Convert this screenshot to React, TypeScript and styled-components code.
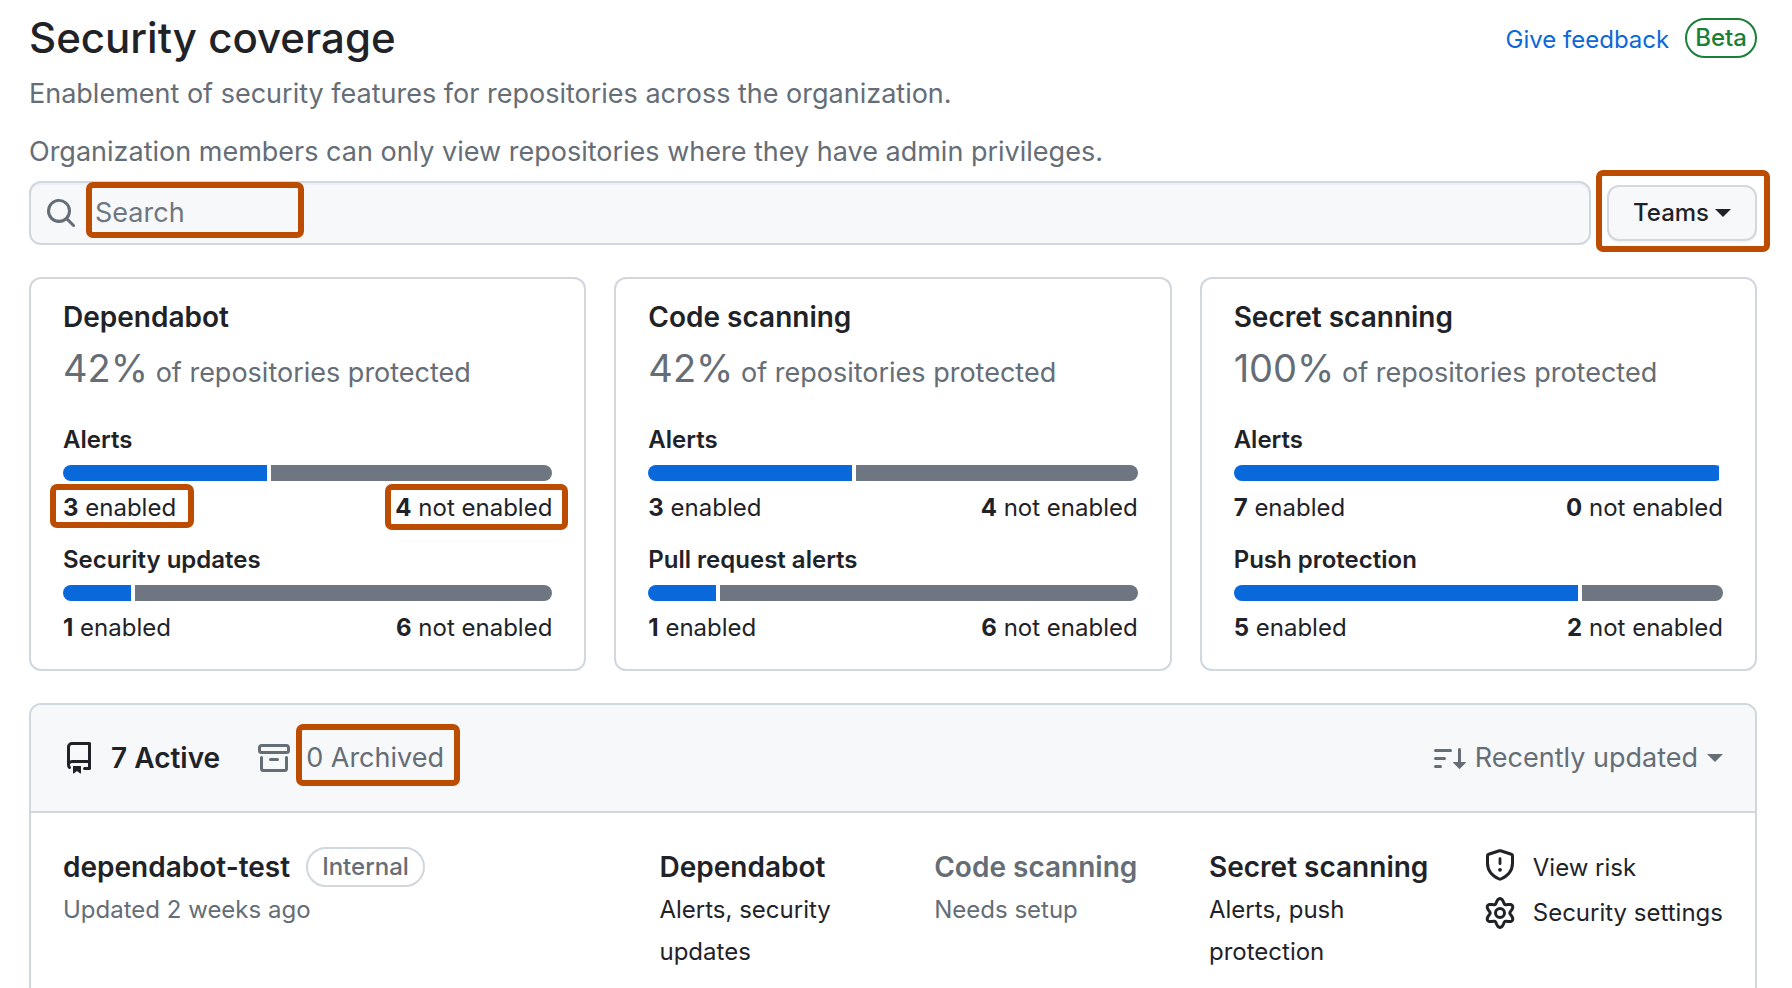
import React, { useState } from "react";
import styled, { createGlobalStyle } from "styled-components";

const fg = "#1f2328";
const muted = "#656d76";
const line = "#d0d7de";
const subtle = "#f6f8fa";
const blue = "#0969da";
const mark = "#bc4c00";

const GlobalStyle = createGlobalStyle`
  * { box-sizing: border-box; }
  body {
    margin: 0;
    background: #fff;
    color: ${fg};
    font-family: Inter, "Liberation Sans", sans-serif;
    font-size: 24px;
    line-height: 36px;
  }
  h1, h2, h3, p { margin: 0; }
  button, input { font: inherit; color: inherit; }
`;

const Page = styled.div`
  padding: 11px 35px 24px 29px;
`;

const PageHeader = styled.header`
  display: flex;
  justify-content: space-between;
  align-items: flex-start;
`;

const Title = styled.h1`
  font-size: 42px;
  line-height: 54px;
  font-weight: 500;
`;

const Lead = styled.p`
  font-size: 27px;
  line-height: 58px;
  color: ${muted};
`;

const HeaderAside = styled.div`
  display: flex;
  align-items: flex-end;
  gap: 16px;
  padding-top: 7px;
`;

const FeedbackLink = styled.a`
  color: ${blue};
  text-decoration: none;
`;

const Pill = styled.span<{ $tone?: "success" }>`
  display: inline-flex;
  align-items: center;
  height: 40px;
  padding: 0 ${(p) => (p.$tone ? 8 : 14)}px;
  border: 2px solid ${(p) => (p.$tone ? "#1a7f37" : line)};
  border-radius: 20px;
  color: ${(p) => (p.$tone ? "#1a7f37" : muted)};
  font-weight: 500;
`;

const Toolbar = styled.div`
  display: flex;
  align-items: center;
  gap: 16px;
  margin-bottom: 32px;
`;

const SearchField = styled.label`
  flex: 1;
  display: flex;
  align-items: center;
  height: 64px;
  padding: 0 14px;
  gap: 18px;
  border: 2px solid ${line};
  border-radius: 12px;
  background: ${subtle};
  box-shadow: inset 0 2px 0 rgba(208, 215, 222, 0.2);
  color: ${muted};
`;

const SearchInput = styled.input`
  flex: 1;
  min-width: 0;
  height: 36px;
  padding: 0;
  border: 0;
  outline: 0;
  background: transparent;
  font-size: 27px;
  &::placeholder { color: #6e7781; opacity: 1; }
`;

const InputSlot = styled.span`
  position: relative;
  flex: 1;
  display: flex;
`;

const Anchor = styled.span`
  position: relative;
  display: inline-block;
`;

/* Outline that lies over the interface and calls out one part of it. */
const Callout = styled.span<{ $inset: string; $width?: string }>`
  position: absolute;
  inset: ${(p) => p.$inset};
  width: ${(p) => p.$width ?? "auto"};
  border: 6px solid ${mark};
  border-radius: 7px;
  pointer-events: none;
`;

const TeamsButton = styled.button`
  display: flex;
  align-items: center;
  justify-content: center;
  gap: 6px;
  width: 150px;
  height: 56px;
  padding: 0;
  border: 2px solid #d5d8da;
  border-radius: 12px;
  background: ${subtle};
  box-shadow: 0 2px 0 rgba(31, 35, 40, 0.04);
  font-weight: 500;
`;

const Caret = styled.span`
  border: 8px solid transparent;
  border-top-color: currentColor;
  border-bottom: 0;
`;

const Cards = styled.section`
  display: grid;
  grid-template-columns: repeat(3, 1fr);
  gap: 28px;
  margin-bottom: 32px;
`;

const Card = styled.article`
  padding: 18px 32px 23px;
  border: 2px solid ${line};
  border-radius: 12px;
`;

const CardTitle = styled.h2`
  font-size: 28px;
  line-height: 40px;
  font-weight: 600;
`;

const Coverage = styled.p`
  margin: 4px 0 17px;
  font-size: 27px;
  line-height: 64px;
  color: ${muted};
`;

const Percent = styled.span`
  font-size: 38px;
  line-height: 40px;
`;

const Metric = styled.div`
  & + & { margin-top: 16px; }
`;

const MetricTitle = styled.h3`
  font-size: 24px;
  line-height: 36px;
  font-weight: 600;
`;

const Bar = styled.div`
  display: flex;
  gap: 4px;
  height: 16px;
  margin: 7px 0 9px;
  border-radius: 8px;
  overflow: hidden;
`;

const Segment = styled.span<{ $color: string }>`
  background: ${(p) => p.$color};
`;

const Counts = styled.div`
  display: flex;
  justify-content: space-between;
`;

const List = styled.section`
  border: 2px solid ${line};
  border-radius: 12px;
`;

const ListHeader = styled.header`
  display: flex;
  justify-content: space-between;
  align-items: center;
  height: 108px;
  padding: 0 32px;
  border-bottom: 2px solid ${line};
  border-radius: 10px 10px 0 0;
  background: ${subtle};
  font-size: 27px;
`;

const Tabs = styled.nav`
  display: flex;
  gap: 38px;
`;

const Tab = styled.a<{ $active?: boolean }>`
  display: flex;
  align-items: center;
  gap: 16px;
  color: ${(p) => (p.$active ? fg : muted)};
  font-size: ${(p) => (p.$active ? 28 : 27)}px;
  font-weight: ${(p) => (p.$active ? 600 : 400)};
  text-decoration: none;
`;

const SortButton = styled.button`
  display: flex;
  align-items: center;
  gap: 9px;
  padding: 0;
  border: 0;
  background: transparent;
  color: ${muted};
`;

const Row = styled.article`
  display: grid;
  grid-template-columns: 597fr 275fr 275fr 275fr 238fr;
  padding: 32px;
`;

const NameLine = styled.div`
  display: flex;
  align-items: center;
  gap: 16px;
`;

const RowTitle = styled.h3`
  font-size: 28px;
  line-height: 44px;
  font-weight: 600;
`;

const Feature = styled.div<{ $muted?: boolean }>`
  padding-right: 48px;
  color: ${(p) => (p.$muted ? muted : fg)};
`;

const Detail = styled.p<{ $muted?: boolean }>`
  line-height: 42px;
  color: ${(p) => (p.$muted ? muted : "inherit")};
`;

const Actions = styled.div`
  display: flex;
  flex-direction: column;
`;

const Action = styled.a`
  display: flex;
  align-items: center;
  gap: 17px;
  height: 45px;
  color: ${fg};
  text-decoration: none;
  white-space: nowrap;
`;

const Svg = styled.svg`
  width: 32px;
  height: 32px;
  flex: none;
  fill: currentColor;
  overflow: visible;
`;

const paths = {
  search:
    "M10.68 11.74a6 6 0 0 1-7.922-8.982 6 6 0 0 1 8.982 7.922l3.04 3.04a.749.749 0 0 1-.326 1.275.749.749 0 0 1-.734-.215ZM11.5 7a4.499 4.499 0 1 0-8.997 0A4.499 4.499 0 0 0 11.5 7Z",
  repo: "M2 2.5A2.5 2.5 0 0 1 4.5 0h8.75a.75.75 0 0 1 .75.75v12.5a.75.75 0 0 1-.75.75h-2.5a.75.75 0 0 1 0-1.5h1.75v-2h-8a1 1 0 0 0-.714 1.7.75.75 0 1 1-1.072 1.05A2.495 2.495 0 0 1 2 11.5Zm10.5-1h-8a1 1 0 0 0-1 1v6.708A2.486 2.486 0 0 1 4.5 9h8ZM5 12.25a.25.25 0 0 1 .25-.25h3.5a.25.25 0 0 1 .25.25v3.25a.25.25 0 0 1-.4.2l-1.45-1.087a.249.249 0 0 0-.3 0L5.4 15.7a.25.25 0 0 1-.4-.2Z",
  archive:
    "M0 2.75C0 1.784.784 1 1.75 1h12.5c.966 0 1.75.784 1.75 1.75v1.5A1.75 1.75 0 0 1 14.25 6H1.75A1.75 1.75 0 0 1 0 4.25ZM1.75 7a.75.75 0 0 1 .75.75v5.5c0 .138.112.25.25.25h10.5a.25.25 0 0 0 .25-.25v-5.5a.75.75 0 0 1 1.5 0v5.5A1.75 1.75 0 0 1 13.25 15H2.75A1.75 1.75 0 0 1 1 13.25v-5.5A.75.75 0 0 1 1.75 7Zm0-4.5a.25.25 0 0 0-.25.25v1.5c0 .138.112.25.25.25h12.5a.25.25 0 0 0 .25-.25v-1.5a.25.25 0 0 0-.25-.25ZM6.25 8h3.5a.75.75 0 0 1 0 1.5h-3.5a.75.75 0 0 1 0-1.5Z",
  sort: "M0 4.25a.75.75 0 0 1 .75-.75h7.5a.75.75 0 0 1 0 1.5H.75A.75.75 0 0 1 0 4.25Zm0 4a.75.75 0 0 1 .75-.75h4.5a.75.75 0 0 1 0 1.5H.75A.75.75 0 0 1 0 8.25Zm0 4a.75.75 0 0 1 .75-.75h2.5a.75.75 0 0 1 0 1.5H.75a.75.75 0 0 1-.75-.75ZM13.5 10h2.25a.25.25 0 0 1 .177.427l-3 3a.25.25 0 0 1-.354 0l-3-3A.25.25 0 0 1 9.75 10H12V3.75a.75.75 0 0 1 1.5 0V10Z",
};

function Icon({ name }: { name: keyof typeof paths }) {
  return (
    <Svg viewBox="0 0 16 16" aria-hidden="true">
      <path d={paths[name]} />
    </Svg>
  );
}

function ShieldIcon() {
  return (
    <Svg viewBox="0 3 32 32" aria-hidden="true">
      <path
        d="M15.4 1.8 4.7 5.2a1.7 1.7 0 0 0-1.2 1.6V14c0 7.3 4.6 12.9 11.7 16a2 2 0 0 0 1.6 0c7.1-3.1 11.7-8.7 11.7-16V6.8a1.7 1.7 0 0 0-1.2-1.6L16.6 1.8a2 2 0 0 0-1.2 0Z"
        fill="none"
        stroke="currentColor"
        strokeWidth="3"
      />
      <path d="M16 9.7v5" stroke="currentColor" strokeWidth="2.8" strokeLinecap="round" />
      <circle cx="16" cy="20.8" r="1.9" />
    </Svg>
  );
}

/* Six-lobed outline: the radius swings between 9.8 (valley) and 14.4 (tip). */
const gearOutline = Array.from({ length: 120 }, (_, i) => {
  const angle = (i / 120) * 2 * Math.PI;
  const radius = 12.1 + 2.3 * Math.cos(6 * angle);
  const x = 16 + radius * Math.sin(angle);
  const y = 16 - radius * Math.cos(angle);
  return `${x.toFixed(2)},${y.toFixed(2)}`;
}).join(" ");

function GearIcon() {
  return (
    <Svg viewBox="0 0 32 32" aria-hidden="true">
      <g fill="none" stroke="currentColor" strokeWidth="3" strokeLinejoin="round">
        <polygon points={gearOutline} />
        <circle cx="16" cy="16" r="4.5" />
      </g>
    </Svg>
  );
}

type MetricData = { title: string; on: number; off: number; marked?: boolean };

const cards: { title: string; percent: string; metrics: MetricData[] }[] = [
  {
    title: "Dependabot",
    percent: "42%",
    metrics: [
      { title: "Alerts", on: 3, off: 4, marked: true },
      { title: "Security updates", on: 1, off: 6 },
    ],
  },
  {
    title: "Code scanning",
    percent: "42%",
    metrics: [
      { title: "Alerts", on: 3, off: 4 },
      { title: "Pull request alerts", on: 1, off: 6 },
    ],
  },
  {
    title: "Secret scanning",
    percent: "100%",
    metrics: [
      { title: "Alerts", on: 7, off: 0 },
      { title: "Push protection", on: 5, off: 2 },
    ],
  },
];

function MetricBlock({ title, on, off, marked }: MetricData) {
  const share = Math.floor((100 * on) / (on + off));
  return (
    <Metric>
      <MetricTitle>{title}</MetricTitle>
      <Bar>
        <Segment $color={blue} style={{ flexGrow: share }} />
        <Segment $color="#6e7781" style={{ flexGrow: 100 - share }} />
      </Bar>
      <Counts>
        <Anchor>
          <b>{on}</b> enabled
          {marked && <Callout $inset="-6px -18px -2px -13px" />}
        </Anchor>
        <Anchor>
          <b>{off}</b> not enabled
          {marked && <Callout $inset="-6px -16px -4px -10px" />}
        </Anchor>
      </Counts>
    </Metric>
  );
}

export default function App() {
  const [query, setQuery] = useState("");
  return (
    <Page>
      <GlobalStyle />
      <PageHeader>
        <div>
          <Title>Security coverage</Title>
          <Lead>Enablement of security features for repositories across the organization.</Lead>
          <Lead>Organization members can only view repositories where they have admin privileges.</Lead>
        </div>
        <HeaderAside>
          <FeedbackLink href="#feedback">Give feedback</FeedbackLink>
          <Pill $tone="success">Beta</Pill>
        </HeaderAside>
      </PageHeader>

      <Toolbar>
        <SearchField>
          <Icon name="search" />
          <InputSlot>
            <SearchInput
              type="text"
              aria-label="Search"
              placeholder="Search"
              value={query}
              onChange={(e) => setQuery(e.target.value)}
            />
            <Callout $inset="-13px auto -7px -9px" $width="218px" />
          </InputSlot>
        </SearchField>
        <Anchor>
          <TeamsButton type="button">
            Teams <Caret />
          </TeamsButton>
          <Callout $inset="-15px -13px -11px -11px" />
        </Anchor>
      </Toolbar>

      <Cards>
        {cards.map((card) => (
          <Card key={card.title}>
            <CardTitle>{card.title}</CardTitle>
            <Coverage>
              <Percent>{card.percent}</Percent> of repositories protected
            </Coverage>
            {card.metrics.map((m) => (
              <MetricBlock key={m.title} {...m} />
            ))}
          </Card>
        ))}
      </Cards>

      <List>
        <ListHeader>
          <Tabs>
            <Tab href="#active" $active>
              <Icon name="repo" />7 Active
            </Tab>
            <Tab href="#archived">
              <Icon name="archive" />
              <Anchor>
                0 Archived
                <Callout $inset="-16px -16px -10px -10px" />
              </Anchor>
            </Tab>
          </Tabs>
          <SortButton type="button">
            <Icon name="sort" />
            Recently updated <Caret />
          </SortButton>
        </ListHeader>
        <Row>
          <div>
            <NameLine>
              <RowTitle>dependabot-test</RowTitle>
              <Pill>Internal</Pill>
            </NameLine>
            <Detail $muted>Updated 2 weeks ago</Detail>
          </div>
          <Feature>
            <RowTitle>Dependabot</RowTitle>
            <Detail>Alerts, security updates</Detail>
          </Feature>
          <Feature $muted>
            <RowTitle>Code scanning</RowTitle>
            <Detail>Needs setup</Detail>
          </Feature>
          <Feature>
            <RowTitle>Secret scanning</RowTitle>
            <Detail>Alerts, push protection</Detail>
          </Feature>
          <Actions>
            <Action href="#risk">
              <ShieldIcon />
              View risk
            </Action>
            <Action href="#settings">
              <GearIcon />
              Security settings
            </Action>
          </Actions>
        </Row>
      </List>
    </Page>
  );
}
